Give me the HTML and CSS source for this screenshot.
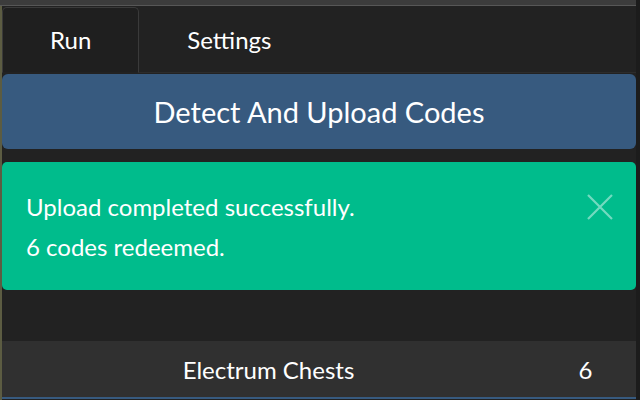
FILE: index.html
```html
<!DOCTYPE html>
<html>
<head>
<meta charset="utf-8">
<link rel="stylesheet" href="styles.css">
</head>
<body>
<div class="frame">
  <div class="edge"></div>
  <div class="main">
    <div class="topbar"></div>
    <ul class="tabs">
      <li class="tab active">Run</li>
      <li class="tab">Settings</li>
    </ul>
    <button class="primary">Detect And Upload Codes</button>
    <div class="alert">
      <div class="alert-text">
        <div>Upload completed successfully.</div>
        <div class="second">6 codes redeemed.</div>
      </div>
      <svg class="close" width="26" height="26" viewBox="0 0 26 26">
        <path d="M1 1 L25 25 M25 1 L1 25" stroke="rgba(255,255,255,0.45)" stroke-width="2.2" fill="none"/>
      </svg>
    </div>
    <table class="results">
      <tr>
        <td class="name">Electrum Chests</td>
        <td class="count">6</td>
      </tr>
    </table>
  </div>
  <div class="rightedge"></div>
</div>
</body>
</html>
```
FILE: styles.css
```css
html, body {
  margin: 0;
  padding: 0;
  background: #222222;
  width: 640px;
  height: 400px;
  overflow: hidden;
  font-family: Lato, "Liberation Sans", sans-serif;
  color: #ffffff;
}
.frame {
  display: flex;
  width: 640px;
  height: 400px;
}
.edge {
  width: 2px;
  background: #5c5c42;
  flex: none;
}
.rightedge {
  width: 4px;
  background: #1c1c1c;
  flex: none;
}
.main {
  flex: 1;
  display: flex;
  flex-direction: column;
  min-width: 0;
}
.topbar {
  height: 5px;
  background: #3c3c3c;
  border-bottom: 1px solid #575757;
  margin-left: -2px;
  margin-right: -4px;
}
.tabs {
  list-style: none;
  margin: 0;
  padding: 1px 0 0 0;
  display: flex;
  border-bottom: 1px solid #2c2c2c;
  height: 67px;
  box-sizing: border-box;
}
.tab {
  padding: 0 47px;
  font-size: 24px;
  line-height: 64px;
  height: 66px;
  box-sizing: border-box;
  border: 1px solid transparent;
  border-radius: 5px 5px 0 0;
}
.tab.active {
  border-color: #3a3a3a;
  border-bottom-color: #222222;
  background: #1f1f1f;
}
.primary {
  margin: 1px 0 0 0;
  height: 75px;
  background: #375a7f;
  border: none;
  border-radius: 6px;
  color: #ffffff;
  font-family: Lato, "Liberation Sans", sans-serif;
  font-size: 29px;
  padding: 0;
}
.alert {
  margin-top: 13px;
  background: #00bc8c;
  border-radius: 5px;
  height: 128px;
  box-sizing: border-box;
  padding: 26px 24px;
  display: flex;
  justify-content: space-between;
  align-items: flex-start;
}
.alert-text {
  font-size: 24px;
  line-height: 38px;
}
.alert-text .second {
  margin-top: 2px;
}
.close {
  margin-top: 6px;
  margin-right: -1px;
}
.results {
  margin-top: 51px;
  border-collapse: collapse;
  width: 100%;
}
.results td {
  background: #303030;
  height: 56px;
  padding: 0;
  font-size: 24px;
  text-align: center;
  border-bottom: 2px solid #375a7f;
}
.results .count {
  width: 101px;
}
```
